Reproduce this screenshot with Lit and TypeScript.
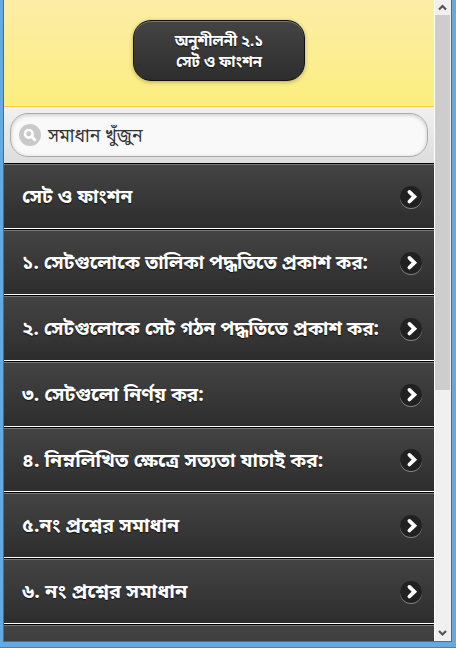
import { LitElement, html, css, svg } from "lit";
import { customElement, property } from "lit/decorators.js";

interface Lesson { title: string; height: number; stretch: number; }

const lessons: Lesson[] = [
  { title: "সেট ও ফাংশন", height: 66, stretch: 1.005 },
  { title: "১. সেটগুলোকে তালিকা পদ্ধতিতে প্রকাশ কর:", height: 66, stretch: 0.998 },
  { title: "২. সেটগুলোকে সেট গঠন পদ্ধতিতে প্রকাশ কর:", height: 66, stretch: 0.996 },
  { title: "৩. সেটগুলো নির্ণয় কর:", height: 66, stretch: 1.017 },
  { title: "৪. নিম্নলিখিত ক্ষেত্রে সত্যতা যাচাই কর:", height: 65, stretch: 1.027 },
  { title: "৫.নং প্রশ্নের সমাধান", height: 66, stretch: 1.03 },
  { title: "৬. নং প্রশ্নের সমাধান", height: 66, stretch: 1.05 },
  { title: "", height: 66, stretch: 1 },
];

const chevron = svg`<path d="M9.4 5.9 L14.4 10.7 L9.4 15.5" fill="none" stroke="#fff" stroke-width="3.8" stroke-linecap="round"/>`;

@customElement("lesson-row")
class LessonRow extends LitElement {
  @property() title = "";
  @property({ type: Number }) stretch = 1;
  static styles = css`
    :host { display: flex; box-sizing: border-box; align-items: center; justify-content: space-between;
      padding: 1px 12px 0 18px; border-top: 1px solid #000; border-bottom: 1px solid #fff;
      box-shadow: inset 0 1px 0 #777; background: linear-gradient(#444, #2d2d2d); flex: none; }
    .label { font: bold 19px "Noto Sans Bengali", "Noto Sans", sans-serif; color: #fff; white-space: nowrap;
      text-shadow: 0 1px 1px #111; line-height: 24px; padding-top: 5px; transform-origin: 0 50%; }
    .arrow { width: 22px; height: 22px; border-radius: 50%; background: #212121; box-shadow: 0 1px 0 rgba(255,255,255,.4); }
    .arrow svg { display: block; }
  `;
  render() {
    return html`<span class="label" style="transform:scaleX(${this.stretch})">${this.title}</span>
      <span class="arrow"><svg width="22" height="22" viewBox="0 0 22 22">${chevron}</svg></span>`;
  }
}

@customElement("app-root")
class AppRoot extends LitElement {
  static styles = css`
    :host { display: flex; flex-direction: column; box-sizing: border-box; width: 456px; height: 648px; overflow: hidden;
      background: #64a9e0; border-bottom: 1px solid #4a80b2; padding: 0 4px 5px 3px;
      font-family: "Noto Sans Bengali", "Noto Sans", sans-serif; }
    .window { display: flex; box-sizing: border-box; height: 642px; border: 1px solid #436f96; border-top: 0; background: #fff; }
    .page { display: flex; flex-direction: column; width: 430px; overflow: hidden; }
    .header { box-sizing: border-box; flex: none; height: 107px; padding-top: 20px; border-bottom: 1px solid #f7c942;
      background: linear-gradient(#fceda7, #fbee7e); display: flex; justify-content: center; align-items: flex-start; }
    .title { box-sizing: border-box; width: 172px; height: 61px; border: 1px solid #111; border-radius: 18px;
      background: linear-gradient(#444, #2d2d2d); box-shadow: inset 0 1px 0 #777, 0 1px 4px rgba(0,0,0,.3);
      color: #fff; text-shadow: 0 1px 1px #111; text-align: center; font-weight: bold; font-size: 14.9px; line-height: 21px; padding-top: 11px; }
    .search { box-sizing: border-box; flex: none; height: 56px; padding: 6px; background: linear-gradient(#f0f0f0, #ddd); }
    .field { box-sizing: border-box; height: 44px; border: 1px solid #aaa; border-radius: 18px; background: #f9f9f9;
      box-shadow: inset 0 1px 4px rgba(0,0,0,.2); display: flex; align-items: center; gap: 7px; padding-left: 8px;
      color: #333; font-size: 19px; line-height: 24px; }
    .hint { padding-top: 5px; transform: scaleX(.93); transform-origin: 0 50%; }
    .glass { display: block; }
    .scroll { box-sizing: border-box; width: 17px; background: #f0f0f0; border-left: 1px solid #fff;
      padding: 0 1px 0 0; display: flex; flex-direction: column; justify-content: space-between; }
    .upper { display: flex; flex-direction: column; }
    .thumb { height: 375px; width: 15px; background: #cdcdcd; }
    .scroll svg { display: block; }
  `;
  render() {
    return html`
      <div class="window">
        <div class="page">
          <div class="header"><div class="title">অনুশীলনী ২.১<br>সেট ও ফাংশন</div></div>
          <div class="search"><div class="field">
            <svg class="glass" width="22" height="22" viewBox="0 0 22 22">
              <circle cx="11" cy="11" r="11" fill="#c9c9c9"/>
              <circle cx="9.8" cy="9.8" r="3.8" fill="none" stroke="#fff" stroke-width="2.6"/>
              <path d="M12.6 12.6L15.8 15.8" stroke="#fff" stroke-width="3" stroke-linecap="round"/>
            </svg><span class="hint">সমাধান খুঁজুন</span></div></div>
          ${lessons.map((l) => html`<lesson-row .title=${l.title} .stretch=${l.stretch} style="height:${l.height}px"></lesson-row>`)}
        </div>
        <div class="scroll">
          <div class="upper">
            <svg width="15" height="15"><path d="M4 9.5L7.5 6L11 9.5" fill="none" stroke="#555" stroke-width="2.2"/></svg>
            <div class="thumb"></div>
          </div>
          <svg width="15" height="15"><path d="M4 5L7.5 8.5L11 5" fill="none" stroke="#555" stroke-width="2.2"/></svg>
        </div>
      </div>`;
  }
}
